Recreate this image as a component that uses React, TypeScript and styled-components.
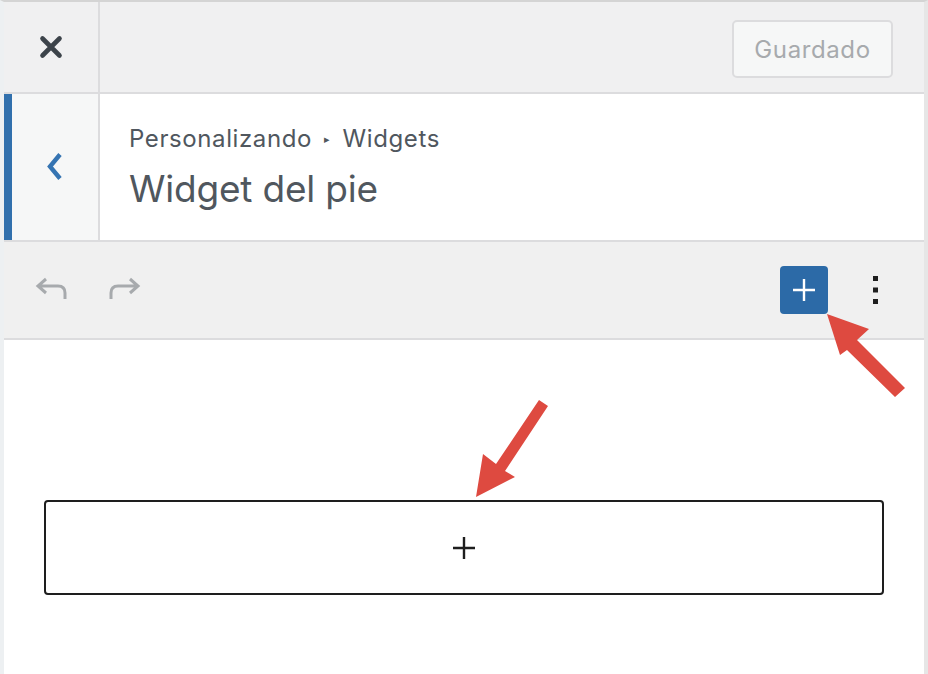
import React from 'react'
import styled, { createGlobalStyle } from 'styled-components'

const GlobalStyle = createGlobalStyle`
  html, body {
    margin: 0;
    padding: 0;
    background: #ffffff;
  }
  body {
    font-family: Inter, Roboto, "Noto Sans", "Liberation Sans", sans-serif;
    -webkit-font-smoothing: antialiased;
  }
`

const Page = styled.div`
  position: relative;
  width: 928px;
  height: 674px;
  box-sizing: border-box;
  border-top: 2px solid #d4d4d4;
  border-left: 4px solid #edf0f2;
  border-right: 4px solid #e6e6e6;
  display: flex;
  flex-direction: column;
  overflow: hidden;
  background: #ffffff;
`

const Header = styled.div`
  display: flex;
  align-items: stretch;
  height: 90px;
  background: #f0f0f1;
  border-bottom: 2px solid #dcdcde;
`

const SideButton = styled.div<{ $accent?: boolean }>`
  width: ${({ $accent }) => ($accent ? '86px' : '94px')};
  flex: none;
  display: flex;
  align-items: center;
  justify-content: center;
  border-right: 2px solid #dcdcde;
  background: ${({ $accent }) => ($accent ? '#f6f7f7' : '#f0f0f1')};
  border-left: ${({ $accent }) => ($accent ? '8px solid #3170ad' : 'none')};
`

const HeaderSpacer = styled.div`
  flex: 1;
  display: flex;
  align-items: center;
  justify-content: flex-end;
  padding: 4px 31px 0 0;
`

const SavedButton = styled.button`
  width: 161px;
  height: 58px;
  box-sizing: border-box;
  border: 2px solid #dcdcde;
  border-radius: 5px;
  background: #f6f7f7;
  color: #a7aaad;
  font-family: inherit;
  font-size: 24px;
  letter-spacing: 0.6px;
  padding: 0;
`

const TitleSection = styled.div`
  display: flex;
  align-items: stretch;
  height: 146px;
  background: #ffffff;
  border-bottom: 2px solid #dcdcde;
`

const TitleText = styled.div`
  display: flex;
  flex-direction: column;
  justify-content: center;
  padding-left: 29px;
  color: #50575e;
`

const Breadcrumb = styled.div`
  font-size: 24px;
  letter-spacing: 0.6px;
  line-height: 28px;
  display: flex;
  align-items: center;
  gap: 12px;
  margin-top: 2px;
`

const Caret = styled.span`
  font-size: 11px;
  line-height: 1;
`

const Title = styled.div`
  font-size: 37px;
  line-height: 44px;
  margin-top: 14px;
  letter-spacing: -0.2px;
`

const Toolbar = styled.div`
  display: flex;
  align-items: center;
  height: 96px;
  background: #f0f0f0;
  border-bottom: 2px solid #dcdcde;
  padding: 0 0 0 24px;
`

const HistoryButton = styled.div`
  width: 48px;
  height: 48px;
  display: flex;
  align-items: center;
  justify-content: center;
  margin-right: 24px;
`

const ToolbarSpacer = styled.div`
  flex: 1;
`

const InserterButton = styled.div`
  width: 48px;
  height: 48px;
  border-radius: 4px;
  background: #2c6aa7;
  display: flex;
  align-items: center;
  justify-content: center;
`

const MoreButton = styled.div`
  width: 48px;
  height: 48px;
  margin: 0 24px 0 24px;
  display: flex;
  align-items: center;
  justify-content: center;
`

const Content = styled.div`
  flex: 1;
  padding: 160px 40px 0 40px;
  background: #ffffff;
`

const Appender = styled.div`
  height: 95px;
  box-sizing: border-box;
  border: 2px solid #1e1e1e;
  border-radius: 4px;
  display: flex;
  align-items: center;
  justify-content: center;
`

const Arrows = styled.svg`
  position: absolute;
  left: -4px;
  top: -2px;
  pointer-events: none;
`

const CloseIcon = () => (
  <svg width="24" height="24" viewBox="0 0 24 24">
    <path d="M3.5 3.5 L20.5 20.5 M20.5 3.5 L3.5 20.5" stroke="#3c434a" strokeWidth="4.6" strokeLinecap="round" />
  </svg>
)

const BackIcon = () => (
  <svg width="20" height="30" viewBox="0 0 20 30">
    <path d="M15 2.5 L5 14.5 L15 26.5" stroke="#3574b2" strokeWidth="4.4" fill="none" />
  </svg>
)

const UndoIcon = () => (
  <svg width="36" height="30" viewBox="0 0 36 30">
    <path
      d="M12 4 L4 11 L12 18 M4 11 H24 Q31 11 31 18 V24"
      stroke="#a7aaad"
      strokeWidth="3"
      fill="none"
    />
  </svg>
)

const RedoIcon = () => (
  <svg width="36" height="30" viewBox="0 0 36 30">
    <path
      d="M24 4 L32 11 L24 18 M32 11 H12 Q5 11 5 18 V24"
      stroke="#a7aaad"
      strokeWidth="3"
      fill="none"
    />
  </svg>
)

const PlusIcon = ({ color, size }: { color: string; size: number }) => (
  <svg width={size} height={size} viewBox="0 0 24 24">
    <path d="M12 1 V23 M1 12 H23" stroke={color} strokeWidth="2.4" />
  </svg>
)

const KebabIcon = () => (
  <svg width="6" height="28" viewBox="0 0 6 28">
    <rect x="0" y="0" width="5" height="5" fill="#1e1e1e" />
    <rect x="0" y="11.5" width="5" height="5" fill="#1e1e1e" />
    <rect x="0" y="23" width="5" height="5" fill="#1e1e1e" />
  </svg>
)

export default function App() {
  return (
    <>
      <GlobalStyle />
      <Page>
        <Header>
          <SideButton>
            <CloseIcon />
          </SideButton>
          <HeaderSpacer>
            <SavedButton>Guardado</SavedButton>
          </HeaderSpacer>
        </Header>

        <TitleSection>
          <SideButton $accent>
            <BackIcon />
          </SideButton>
          <TitleText>
            <Breadcrumb>
              <span>Personalizando</span>
              <Caret>▸</Caret>
              <span>Widgets</span>
            </Breadcrumb>
            <Title>Widget del pie</Title>
          </TitleText>
        </TitleSection>

        <Toolbar>
          <HistoryButton>
            <UndoIcon />
          </HistoryButton>
          <HistoryButton>
            <RedoIcon />
          </HistoryButton>
          <ToolbarSpacer />
          <InserterButton>
            <PlusIcon color="#ffffff" size={24} />
          </InserterButton>
          <MoreButton>
            <KebabIcon />
          </MoreButton>
        </Toolbar>

        <Content>
          <Appender>
            <PlusIcon color="#1e1e1e" size={24} />
          </Appender>
        </Content>

        <Arrows width="928" height="674" viewBox="0 0 928 674">
          <g fill="#de4a40">
            <polygon points="827,314 869,329 857,340 905,388 895,397 847,350 840,355" />
            <polygon points="476,497 483,454 496,464 539,400 548,406 505,471 515,477" />
          </g>
        </Arrows>
      </Page>
    </>
  )
}
